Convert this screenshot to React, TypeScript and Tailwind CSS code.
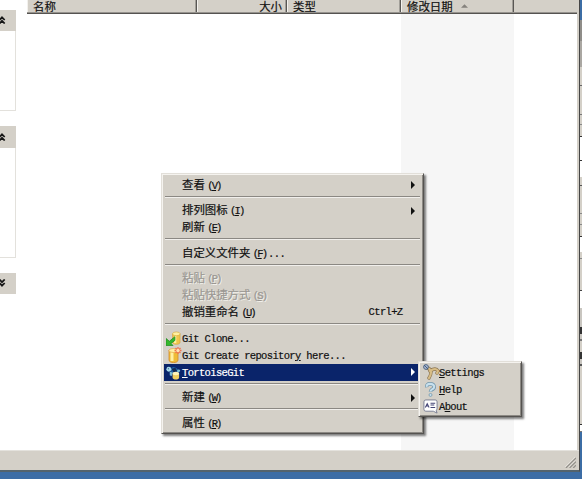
import React from "react";

const latin = "font-['Liberation_Mono',monospace] text-[10.5px] tracking-[-0.65px]";

function Accel({ k }: { k: string }) {
  return (
    <span className="ml-[2.5px] font-['Liberation_Mono',monospace] text-[10.5px] tracking-[-1.9px]">
      (<u className="underline-offset-1">{k}</u>)
    </span>
  );
}

function Separator() {
  return (
    <div className="h-[8.5px] shrink-0 px-[1px] pt-[2px]">
      <div className="h-[2px] border-t border-b border-t-[#8b8883] border-b-[#f1efec]" />
    </div>
  );
}

function Arrow() {
  return (
    <svg viewBox="0 0 4 8" className="ml-auto h-[8px] w-[4px] shrink-0" fill="currentColor">
      <path d="M0 0L4 4L0 8Z" />
    </svg>
  );
}

type RowProps = {
  children: React.ReactNode;
  icon?: React.ReactNode;
  arrow?: boolean;
  shortcut?: string;
  tone?: string;
};

function Row({ children, icon, arrow, shortcut, tone = "text-[#111]" }: RowProps) {
  return (
    <div className={`flex h-[17px] shrink-0 items-center pr-[6px] ${tone}`}>
      <span className="flex w-[18px] shrink-0 items-center pl-[2px]">{icon}</span>
      <span className="whitespace-pre leading-[17px]">{children}</span>
      {shortcut && <span className={`ml-auto mr-[12px] ${latin}`}>{shortcut}</span>}
      {arrow && <Arrow />}
    </div>
  );
}

const CloneIcon = () => (
  <svg viewBox="0 0 16 16" className="h-[15px] w-[15px] shrink-0">
    <path d="M7 3v9c0 3 8 3 8 0V3Z" fill="#f0c44c" stroke="#d09c30" strokeWidth=".6" />
    <path d="M8.5 5v8h2.5V5Z" fill="#fff1a0" />
    <ellipse cx="11" cy="3" rx="4" ry="2" fill="#fff0a0" stroke="#d5a52d" strokeWidth=".6" />
    <path d="M0 8v7.5h7.5l-2.2-2.2L9.5 10V6L3.5 11l-1.5-1.5Z" fill="#34b82c" stroke="#208a20" strokeWidth=".8" />
  </svg>
);

const CreateIcon = () => (
  <svg viewBox="0 0 16 16" className="h-[16px] w-[16px] shrink-0">
    <path d="M3 3v10c0 3.5 9 3.5 9 0V3Z" fill="#efbb37" stroke="#d48a2a" strokeWidth=".8" />
    <path d="M4.5 5v9h3V5Z" fill="#fff0a2" />
    <ellipse cx="7.5" cy="3.5" rx="4.5" ry="2" fill="#fff0a5" stroke="#e09a3a" strokeWidth=".6" />
    <path d="M12 0v7M8.5 3.5h7M9.5 1l5 5M14.5 1l-5 5" stroke="#f0724c" strokeWidth="1.3" />
    <circle cx="12" cy="3.5" r="1.7" fill="#ffe1b0" />
  </svg>
);

const TortoiseIcon = () => (
  <svg viewBox="0 0 16 16" className="h-[15px] w-[15px] shrink-0">
    <path d="M4 5q3-5 8-1l1 4-6 1Z" fill="#2265a8" />
    <path d="M6 4l4-1 2 4-4 1Z" fill="#132a52" />
    <circle cx="3" cy="4.5" r="2.6" fill="#a5d8ea" />
    <path d="M4 7l3 1-1 4-2-1M12 5q4-1 3 2l-3 1Z" fill="#7abfd6" />
    <path d="M7 9v4.5c0 2.5 7 2.5 7 0V9Z" fill="#f0d060" />
    <ellipse cx="10.5" cy="9" rx="3.5" ry="1.8" fill="#fff5b8" />
    <circle cx="2.5" cy="4" r=".6" fill="#17345f" />
  </svg>
);

const SettingsIcon = () => (
  <svg viewBox="0 0 17 16" className="h-[16px] w-[17px] shrink-0">
    <path d="M4 4Q7 4 8 8Q8 11 6 14M7 7Q13 3 15 7l-1 2" fill="none" stroke="#8c7653" strokeWidth="3.4" strokeLinecap="round" />
    <path d="M4 4Q7 4 8 8Q8 11 6 14M7 7Q13 3 15 7l-1 2" fill="none" stroke="#d8bd86" strokeWidth="2.2" strokeLinecap="round" />
    <circle cx="3" cy="3" r="2.4" fill="#a9b7ce" stroke="#536985" strokeWidth="1" />
    <path d="M1 1l4 4" stroke="#445e86" />
  </svg>
);

const HelpIcon = () => (
  <svg viewBox="0 0 16 16" className="h-[15px] w-[15px] shrink-0">
    <path d="M4 5.5Q3.5 2 7.5 2T12 5Q12 7 9.5 8Q8 9 8 10.5" fill="none" stroke="#7295aa" strokeWidth="3.8" />
    <path d="M4 5.2Q3.5 2 7.5 2T12 5Q12 7 9.5 8Q8 9 8 10.2" fill="none" stroke="#c6e0ee" strokeWidth="2.2" />
    <circle cx="8" cy="13.8" r="1.6" fill="#c6e0ee" stroke="#7295aa" strokeWidth=".8" />
  </svg>
);

const AboutIcon = () => (
  <svg viewBox="0 0 16 16" className="h-[15px] w-[15px] shrink-0">
    <path d="M3 1h10q2 0 2 2v7q0 2-1 2l1 3-4-2H3q-2 0-2-2V3q0-2 2-2Z" fill="#fff" stroke="#777c91" strokeWidth="1" />
    <path d="M2.5 9l2-4 2 4M3.5 7.5h2M8 4.5h5M8 6.5h4M8 9h5" fill="none" stroke="#434476" strokeWidth="1.1" />
  </svg>
);

function Chevrons({ down = false }: { down?: boolean }) {
  return (
    <svg viewBox="0 0 6 8" className={`h-[8px] w-[6px] ${down ? "-scale-y-100" : ""}`} fill="none" stroke="#161616" strokeWidth="1.7">
      <path d="M-0.5 4L2 1.3L4.7 4M-0.5 7.5L2 4.8L4.7 7.5" />
    </svg>
  );
}

function Panel({ body, down }: { body?: string; down?: boolean }) {
  return (
    <div className="w-[15.5px]">
      <div className="flex h-[21.5px] items-center bg-[#d4d0c8]"><Chevrons down={down} /></div>
      {body && <div className={`${body} border-r border-b border-[#e3e1dc]`} />}
    </div>
  );
}

function Column({ width, children }: { width: string; children?: React.ReactNode }) {
  return (
    <div className={`${width} flex h-[12px] shrink-0 items-center border-r border-r-[#595754] shadow-[inset_1px_0_#f3f1ed,inset_-1px_0_#a19e98]`}>
      {children}
    </div>
  );
}

const slices = [
  "h-[20px] bg-[#3c6da5]", "h-[21px] bg-[#8f8d89]", "h-[26px] bg-[#aaa7a2]", "h-[18px] bg-[#d4d0c8]",
  "h-[1px] bg-[#666]", "h-[28px] bg-[#d4d0c8]", "h-[1px] bg-[#777]", "h-[9px] bg-[#d4d0c8]",
  "h-[1px] bg-[#888]", "h-[11px] bg-[#d4d0c8]", "h-[1px] bg-[#333]", "h-[23px] bg-white",
  "h-[1px] bg-[#333]", "h-[16px] bg-white", "h-[8px] bg-[#d4d0c8]", "h-[1px] bg-[#555]",
  "h-[27px] bg-[#d4d0c8]", "h-[1px] bg-[#888]", "h-[10px] bg-[#d4d0c8]", "h-[1px] bg-[#888]",
  "h-[11px] bg-[#d4d0c8]", "h-[1px] bg-[#333]", "h-[15px] bg-white", "h-[6px] bg-[#d4d0c8]",
  "h-[1px] bg-[#888]", "h-[31px] bg-[#d4d0c8]", "h-[1px] bg-[#444]", "h-[17px] bg-white",
  "h-[19px] bg-[#c9c6c0]", "h-[7px] bg-[#333]", "h-[5px] bg-[#c9c6c0]", "h-[2px] bg-[#777]",
  "h-[11px] bg-[#d4d0c8]", "h-[7px] bg-[#333]", "h-[5px] bg-[#c9c6c0]", "h-[2px] bg-[#555]",
  "h-[58px] bg-[#d4d0c8]", "h-[1px] bg-[#333]", "h-[6px] bg-white", "h-[1px] bg-[#777]",
];

const bevel =
  "border border-t-[#e2dfd9] border-l-[#e2dfd9] border-r-[#555350] border-b-[#555350] bg-[#d4d0c8] shadow-[inset_1px_1px_#f5f3ef,inset_-1px_-1px_#8c8984,2px_2px_2px_rgba(0,0,0,0.5)]";

export default function App() {
  return (
    <div className="relative flex h-[479px] w-[582px] overflow-hidden bg-[#3c6da5] font-['Noto_Sans_CJK_SC',sans-serif] text-[11.4px] text-[#111] [-webkit-text-stroke:0.2px]">
      <div className="flex h-[472px] w-[580px] shrink-0 flex-col border-r border-b-2 border-r-[#454545] border-b-[#53636c] bg-[#d4d0c8]">
        <div className="flex h-[450px] w-[576.5px] bg-white">
          <div className="flex w-[27px] shrink-0 flex-col gap-[15px] pt-[9.5px]">
            <Panel body="h-[80px]" />
            <Panel body="h-[110px]" />
            <Panel down />
          </div>
          <div className="flex min-w-0 flex-1 flex-col">
            <div className="flex h-[13.5px] shrink-0 border-b border-b-[#555350] bg-[#d4d0c8] leading-[12px] shadow-[inset_0_-1px_#96938e]">
              <Column width="w-[170px]"><span className="pl-[6px]">名称</span></Column>
              <Column width="w-[90px]"><span className="ml-auto pr-[4px]">大小</span></Column>
              <Column width="w-[114px]"><span className="pl-[6px]">类型</span></Column>
              <Column width="w-[113px]">
                <span className="pl-[6px]">修改日期</span>
                <svg viewBox="0 0 8 4" className="ml-[8px] h-[4px] w-[7px]"><path d="M0 4L4 0L8 4Z" fill="#85827d" /></svg>
              </Column>
            </div>
            <div className="ml-[374px] w-[113px] flex-1 bg-[#f6f6f6]" />
          </div>
        </div>
        <div className="flex flex-1 items-end justify-end border-t border-t-[#e4e2dd] pr-[3px] pb-[2px]">
          <svg viewBox="0 0 12 12" className="h-[11px] w-[11px]">
            <path d="M1 12L12 1M5 12L12 5M9 12L12 9" stroke="#918e89" strokeWidth="1.3" />
            <path d="M0 11L11 0M4 11L11 4" stroke="#f4f2ee" strokeWidth=".6" />
          </svg>
        </div>
      </div>
      <div className="flex w-[2px] flex-col">
        {slices.map((s, i) => <div key={i} className={`${s} shrink-0`} />)}
      </div>

      <div className={`absolute top-[173px] left-[161px] flex h-[261px] w-[262.5px] flex-col px-[2px] pt-[2.5px] ${bevel}`}>
        <Row arrow>查看<Accel k="V" /></Row>
        <Separator />
        <Row arrow>排列图标<Accel k="I" /></Row>
        <Row>刷新<Accel k="E" /></Row>
        <Separator />
        <Row>自定义文件夹<Accel k="F" /><span className={`ml-[2px] ${latin}`}>...</span></Row>
        <Separator />
        <Row tone="text-[#9b9893] [text-shadow:1px_1px_#f2f0ec]">粘贴<Accel k="P" /></Row>
        <Row tone="text-[#9b9893] [text-shadow:1px_1px_#f2f0ec]">粘贴快捷方式<Accel k="S" /></Row>
        <Row shortcut="Ctrl+Z">撤销重命名<Accel k="U" /></Row>
        <Separator />
        <Row icon={<CloneIcon />}><span className={latin}>Git Clone...</span></Row>
        <Row icon={<CreateIcon />}><span className={latin}>Git Create repositor<u>y</u> here...</span></Row>
        <Row icon={<TortoiseIcon />} arrow tone="bg-[#0a246a] text-white"><span className={latin}><u>T</u>ortoiseGit</span></Row>
        <Separator />
        <Row arrow>新建<Accel k="W" /></Row>
        <Separator />
        <Row>属性<Accel k="R" /></Row>
      </div>

      <div className={`absolute top-[361px] left-[418px] flex h-[56px] w-[104px] flex-col px-[2px] pt-[1.5px] ${bevel}`}>
        <Row icon={<SettingsIcon />}><span className={latin}><u>S</u>ettings</span></Row>
        <Row icon={<HelpIcon />}><span className={latin}><u>H</u>elp</span></Row>
        <Row icon={<AboutIcon />}><span className={latin}>A<u>b</u>out</span></Row>
      </div>
    </div>
  );
}
